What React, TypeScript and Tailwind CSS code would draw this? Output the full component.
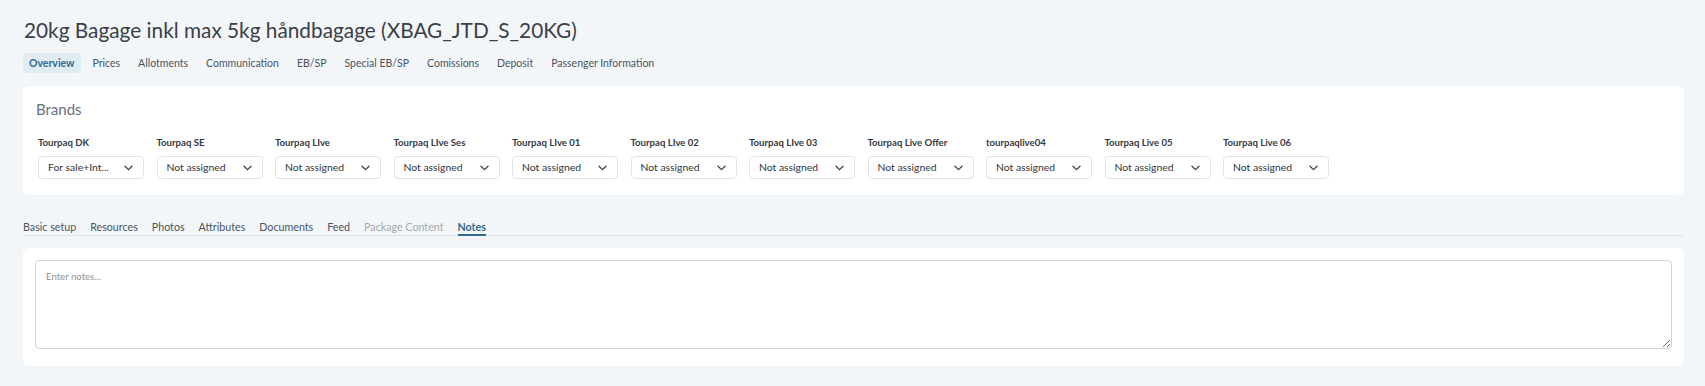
import React from "react";

const brands = [
  { name: "Tourpaq DK", value: "For sale+Int..." },
  { name: "Tourpaq SE", value: "Not assigned" },
  { name: "Tourpaq LIve", value: "Not assigned" },
  { name: "Tourpaq LIve Ses", value: "Not assigned" },
  { name: "Tourpaq LIve 01", value: "Not assigned" },
  { name: "Tourpaq LIve 02", value: "Not assigned" },
  { name: "Tourpaq LIve 03", value: "Not assigned" },
  { name: "Tourpaq Live Offer", value: "Not assigned" },
  { name: "tourpaqlive04", value: "Not assigned" },
  { name: "Tourpaq Live 05", value: "Not assigned" },
  { name: "Tourpaq Live 06", value: "Not assigned" },
];

const topTabs = [
  "Overview",
  "Prices",
  "Allotments",
  "Communication",
  "EB/SP",
  "Special EB/SP",
  "Comissions",
  "Deposit",
  "Passenger Information",
];

const subTabs = [
  "Basic setup",
  "Resources",
  "Photos",
  "Attributes",
  "Documents",
  "Feed",
  "Package Content",
  "Notes",
];

function Chevron() {
  return (
    <svg width="9" height="6" viewBox="0 0 9 6" fill="none" className="shrink-0">
      <path d="M1 1.2L4.5 4.6L8 1.2" stroke="#3b4046" strokeWidth="1.3" strokeLinecap="round" strokeLinejoin="round" />
    </svg>
  );
}

export default function App() {
  return (
    <div
      className="min-h-screen bg-[#f3f6f9] pl-[23px] pr-[21px] pt-[14px] pb-[20px] text-[#3a4149]"
      style={{ fontFamily: 'Lato, "Noto Sans", sans-serif' }}
    >
      <h1 className="pl-[1px] text-[20.8px] leading-[31px] font-normal text-[#3a4047]">
        20kg Bagage inkl max 5kg håndbagage (XBAG_JTD_S_20KG)
      </h1>

      <div className="mt-[8px] flex items-center gap-[6px]">
        {topTabs.map((t, i) => (
          <div
            key={t}
            className={
              i === 0
                ? "h-[20px] rounded-[4px] bg-[#e1ebf2] px-[6px] text-[10.5px] leading-[20px] font-bold text-[#2f6d90]"
                : "h-[20px] px-[6px] text-[10.5px] leading-[20px] text-[#4b545d]"
            }
          >
            {t}
          </div>
        ))}
      </div>

      <div className="mt-[13px] rounded-[6px] bg-white px-[13px] pt-[12px] pb-[16px]">
        <div className="text-[15px] leading-[22px] text-[#66717c] font-normal">Brands</div>
        <div className="mt-[16px] flex gap-[12.5px] pl-[2px]">
          {brands.map((b) => (
            <div key={b.name} className="flex w-[106px] flex-col">
              <div className="text-[9.6px] leading-[14px] font-bold text-[#333a41] whitespace-nowrap">
                {b.name}
              </div>
              <div className="mt-[6px] flex h-[23px] items-center justify-between rounded-[4px] border border-[#dfe3e7] bg-white pl-[9px] pr-[10px]">
                <span className="text-[10.4px] text-[#2f353b] whitespace-nowrap">{b.value}</span>
                <Chevron />
              </div>
            </div>
          ))}
        </div>
      </div>

      <div className="mt-[24px] flex border-b border-[#dde3e8]">
        <div className="flex gap-[14px]">
          {subTabs.map((t) => {
            const active = t === "Notes";
            const disabled = t === "Package Content";
            return (
              <div
                key={t}
                className={
                  active
                    ? "border-b-2 border-[#2f6d90] text-[10.7px] leading-[15px] font-bold text-[#2f6d90] -mb-px"
                    : disabled
                    ? "pb-[1px] text-[10.7px] leading-[15px] text-[#a3a9ae]"
                    : "pb-[1px] text-[10.7px] leading-[15px] text-[#4b545d]"
                }
              >
                {t}
              </div>
            );
          })}
        </div>
      </div>

      <div className="mt-[12px] rounded-[6px] bg-white px-[12px] pt-[12px] pb-[17px]">
        <textarea
          placeholder="Enter notes..."
          className="block h-[89px] w-full rounded-[4px] border border-[#cfd2d6] px-[10px] py-[9px] text-[9.6px] text-[#333] placeholder:text-[#8d9298] outline-none"
        />
      </div>
    </div>
  );
}
